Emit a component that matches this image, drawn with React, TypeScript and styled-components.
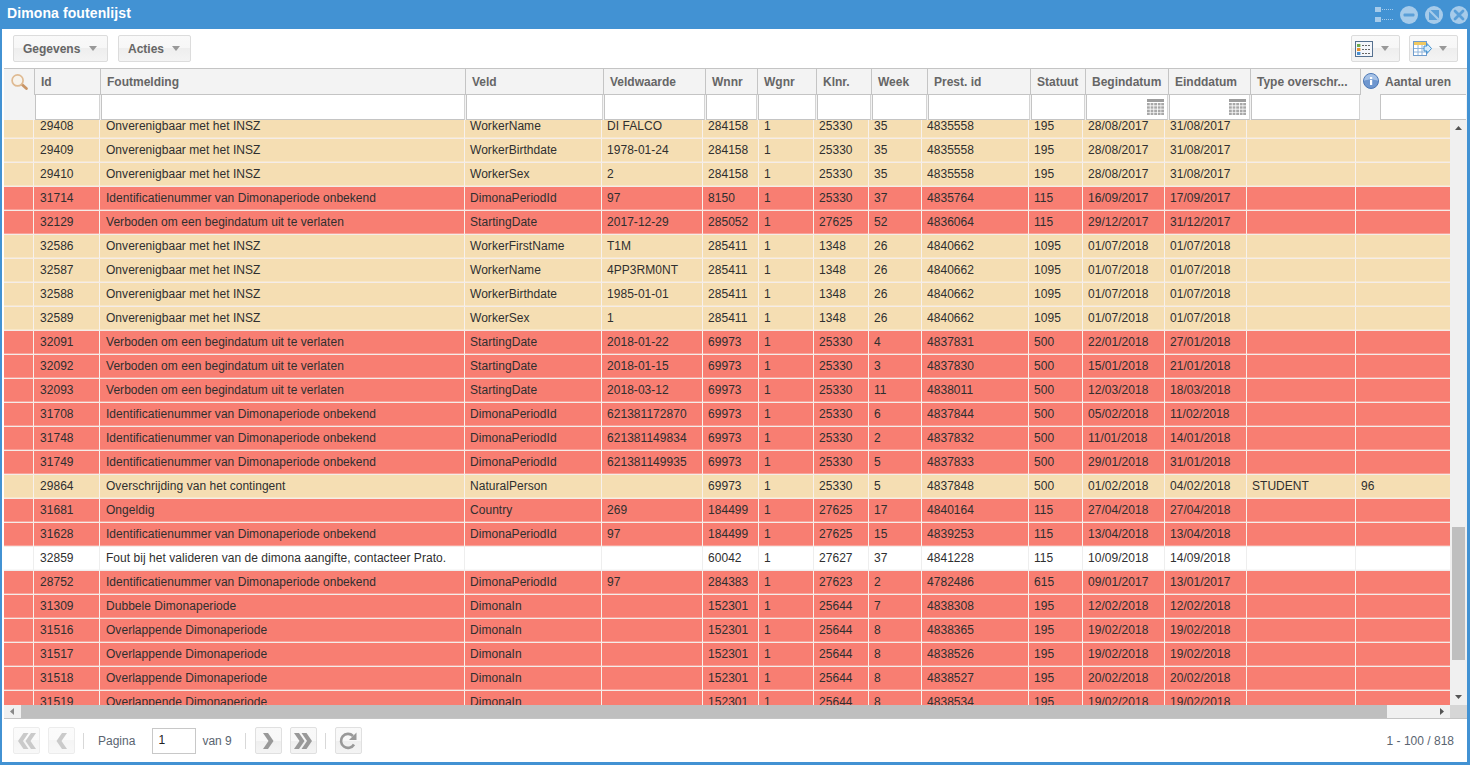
import React from "react";
import styled, { createGlobalStyle } from "styled-components";

const Global = createGlobalStyle`
  html, body { margin: 0; padding: 0; height: 100%; overflow: hidden; }
  #root { height: 100%; }
  * { box-sizing: border-box; }
`;

const headTemplate = "30px 66px 365px 138px 102px 52px 59px 55px 56px 103px 55px 83px 82px 110px 106px";
const bodyTemplate = "29px 66px 365px 137px 101px 56px 55px 55px 53px 107px 54px 82px 82px 109px 95px";

const Window = styled.div`
  height: 765px; width: 1470px; display: flex; flex-direction: column;
  background: #4292d3; padding: 0 3px 3px 2px;
  font-family: "Liberation Sans", Arial, sans-serif;
`;
const TitleBar = styled.div`
  height: 29px; flex: none; display: flex; align-items: center; justify-content: space-between;
  margin-right: -1px; padding-left: 5px; color: #fff; font-size: 14px; font-weight: bold;
`;
const TitleText = styled.span`letter-spacing: .1px; margin-top: -3px;`;
const TitleTools = styled.div`display: flex; align-items: center; gap: 7px;`;
const TreeSlot = styled.span`display: block; line-height: 0; margin-right: -1px;`;
const Panel = styled.div`
  flex: 1; min-height: 0; background: #fff; display: flex; flex-direction: column; padding-left: 2px;
`;
const Toolbar = styled.div`
  height: 39px; flex: none; display: flex; align-items: center; justify-content: space-between;
  padding: 0 9px 0 9px;
`;
const ToolGroup = styled.div<{ $gap: number }>`display: flex; gap: ${p => p.$gap}px;`;
const ToolButton = styled.div<{ $w: number; $icon?: boolean }>`
  width: ${p => p.$w}px; height: 27px; display: flex; align-items: center; justify-content: space-between;
  padding: 0 10px 0 ${p => (p.$icon ? 3 : 9)}px; border: 1px solid #dcdcdc; border-radius: 2px;
  background: linear-gradient(#f9f9f9 0, #f7f7f7 50%, #eeeeee 50%, #f4f4f4 100%);
  color: #666; font-size: 12px; font-weight: bold;
`;
const Caret = styled.span`
  width: 0; height: 0; border: 4.5px solid transparent; border-top: 5px solid #999; border-bottom: 0; display: block;
`;
const Header = styled.div`
  flex: none; height: 52px; display: grid; grid-template-columns: ${headTemplate}; grid-template-rows: 26px 25px;
  border-top: 1px solid #c4c4c4; background: #f3f3f3;
`;
const HeadCell = styled.div`
  display: flex; align-items: center; gap: 7px; padding-left: 6px; font-size: 12px; font-weight: bold; color: #666;
  border-left: 1px solid #c4c4c4; border-bottom: 1px solid #c4c4c4; white-space: nowrap; overflow: hidden;
`;
const SearchCell = styled.div`
  grid-row: 1 / span 2; padding: 5px 0 0 7px; line-height: 0;
`;
const InfoCell = styled(HeadCell)`padding-left: 2px; gap: 6px; border-bottom: 0;`;
const FilterCell = styled.div`
  position: relative; background: #fff; margin-left: 1px;
  border-left: 1px solid #c4c4c4; border-bottom: 1px solid #c4c4c4; border-right: 1px solid #d4d4d4;
`;
const LastFilter = styled.div`
  background: #fff; margin-left: 20px;
  border-left: 1px solid #c4c4c4; border-top: 1px solid #c4c4c4; border-bottom: 1px solid #c4c4c4; margin-top: -1px;
`;
const CalendarSlot = styled.span`position: absolute; right: 3px; top: 4px; display: block; line-height: 0;`;
const BodyArea = styled.div`flex: 1; min-height: 0; display: flex; flex-direction: column;`;
const BodyMain = styled.div`flex: 1; min-height: 0; display: flex;`;
const RowsClip = styled.div`flex: 1; min-width: 0; overflow: hidden;`;
const Rows = styled.div`margin-top: -5px;`;
const Row = styled.div<{ $k: string }>`
  height: 24px; display: grid; grid-template-columns: ${bodyTemplate};
  background: ${p => (p.$k === "o" ? "#f5deb3" : p.$k === "r" ? "#f87e72" : "#fff")};
  border-bottom: 1px solid ${p => (p.$k === "w" ? "#eeeeee" : "#f4ece8")};
  box-shadow: inset 0 -1px 0 ${p => (p.$k === "w" ? "#f8f8f8" : "rgba(255,255,255,.28)")};
`;
const Cell = styled.div<{ $k: string; $pad: number }>`
  border-left: 1px solid ${p => (p.$k === "w" ? "#eeeeee" : "#f7f1ec")};
  padding: 0 0 0 ${p => p.$pad}px; font-size: 12px; line-height: 22px; letter-spacing: .04px; color: #2f2f2f;
  white-space: nowrap; overflow: hidden;
`;
const LeadCell = styled.div``;
const VScroll = styled.div`
  width: 17px; flex: none; background: #f0f0f0; display: flex; flex-direction: column; align-items: center;
`;
const ArrowSlot = styled.div<{ $w?: number; $h: number }>`
  height: ${p => p.$h}px; width: ${p => (p.$w ? `${p.$w}px` : "auto")}; flex: none;
  display: flex; align-items: center; justify-content: center; line-height: 0;
`;
const VThumb = styled.div`width: 13px; height: 133px; flex: none; margin-top: 390px; background: #bfbfbf;`;
const Spacer = styled.div`flex: 1;`;
const HScrollRow = styled.div`height: 13px; flex: none; display: flex; background: #f0f0f0;`;
const HThumb = styled.div`width: 1366px; background: #bfbfbf;`;
const Corner = styled.div`width: 17px; background: #d6d6d6;`;
const Footer = styled.div`
  height: 44px; flex: none; border-top: 1px solid #c4c4c4; display: flex; align-items: center;
  padding: 0 13px 0 9px; font-size: 12px; color: #5a6470;
`;
const PageButton = styled.div<{ $off?: boolean; $m?: number }>`
  width: 27px; height: 27px; flex: none; display: flex; align-items: center; justify-content: center;
  margin-left: ${p => p.$m ?? 0}px; border: 1px solid #e0e0e0; border-radius: 2px;
  background: linear-gradient(#f9f9f9 0, #f8f8f8 50%, #efefef 50%, #f4f4f4 100%);
  opacity: ${p => (p.$off ? 0.6 : 1)};
`;
const Sep = styled.div<{ $m: number }>`width: 1px; height: 16px; background: #d8d8d8; margin-left: ${p => p.$m}px; flex: none;`;
const PageLabel = styled.span<{ $m: number }>`margin-left: ${p => p.$m}px; white-space: nowrap;`;
const PageInput = styled.div`
  width: 44px; height: 26px; flex: none; margin-left: 17px; border: 1px solid #c8c8c8; padding-left: 5px;
  font-size: 12px; line-height: 23px; color: #222;
`;
const Total = styled.div`margin-left: auto;`;

const WinIcon = ({ children }: { children: React.ReactNode }) => (
  <svg width="18" height="18" viewBox="0 0 18 18" fill="none">
    <circle cx="9" cy="9" r="9" fill="#a6cbea" />
    {children}
  </svg>
);
const TreeIcon = () => (
  <svg width="19" height="16" viewBox="0 0 19 16">
    <rect x="0" y="0" width="6" height="5" fill="#a6cbea" />
    <rect x="0" y="10" width="6" height="5" fill="#a6cbea" />
    <path d="M7 2.5h12M7 12.5h12" stroke="#a6cbea" strokeDasharray="1 1" fill="none" />
  </svg>
);
const Magnifier = () => (
  <svg width="17" height="16" viewBox="0 0 17 16" fill="none">
    <path d="M11 10.5l4.400 4" stroke="#c99566" strokeWidth="2.8" strokeLinecap="round" />
    <circle cx="6.600" cy="6.400" r="5.500" fill="#f7f3ec" stroke="#dfba92" strokeWidth="1.700" />
  </svg>
);
const InfoIcon = () => (
  <svg width="16" height="16" viewBox="0 0 16 16" style={{ marginTop: -2 }}>
    <circle cx="8" cy="8" r="7.500" fill="#6f97cf" stroke="#4d78b4" strokeWidth="1" />
    <path d="M1 8a7 7 0 0 1 14 0c-3-2-11-2-14 0z" fill="#a5c1e6" />
    <rect x="7" y="7" width="2.200" height="5" fill="#fff" />
    <rect x="7" y="4" width="2.200" height="2" fill="#fff" />
  </svg>
);
const Calendar = () => (
  <svg width="17" height="16" viewBox="0 0 17 16">
    <rect x="0" y="0" width="17" height="3" fill="#9d9d9d" />
    {[4, 7.3, 10.6, 13.6].map(y =>
      [0, 3.6, 7.2, 10.8, 14.2].map(x => <rect key={`${x}-${y}`} x={x} y={y} width="2.800" height="2.400" fill="#a8a8a8" />)
    )}
  </svg>
);
const ListIcon = () => (
  <svg width="18" height="16" viewBox="0 0 18 16">
    <rect x=".5" y=".5" width="17" height="15" fill="#f4f6fa" stroke="#55708f" />
    <rect x="2" y="3" width="3.400" height="3" fill="#6cab4c" />
    <rect x="2" y="7" width="3.400" height="3" fill="#e8902e" />
    <rect x="2" y="11" width="3.400" height="3" fill="#4a8fd0" />
    <path d="M7 4.500h8M7 8.500h8M7 12.500h8" stroke="#666" strokeDasharray="2 1" />
  </svg>
);
const ExportIcon = () => (
  <svg width="19" height="15" viewBox="0 0 19 15">
    <rect x=".5" y=".5" width="13" height="14" fill="#fff" stroke="#6f9ccc" />
    <rect x="1" y="1" width="12" height="3" fill="#f0c860" />
    <path d="M1 7.500h12M1 11h12M5 4v10M9 4v10" stroke="#8fb4da" />
    <path d="M11 5h3V2.500l4.500 5-4.500 5V10h-3z" fill="#d8ecfa" stroke="#3f8fcf" />
  </svg>
);
const Chevron = ({ double, left, color }: { double?: boolean; left?: boolean; color: string }) => (
  <svg width="20" height="18" viewBox="0 0 20 18" style={{ transform: left ? "scaleX(-1)" : undefined }}>
    {double ? (
      <>
        <path d="M1 1h5l5.500 8L6 17H1l5.500-8z" fill={color} />
        <path d="M8.500 1h5L19 9l-5.500 8h-5L14 9z" fill={color} />
      </>
    ) : (
      <path d="M5 1h5l5.500 8L10 17H5l5.500-8z" fill={color} />
    )}
  </svg>
);
const Refresh = () => (
  <svg width="20" height="20" viewBox="0 0 20 20" fill="none">
    <path d="M16 13.500A7 7 0 1 1 15 5" stroke="#999" strokeWidth="2.600" />
    <path d="M18.500 1.500v7.500h-7.500z" fill="#999" />
  </svg>
);
const Tri = ({ d }: { d: "u" | "d" | "l" | "r" }) => {
  const p = { u: "M1 6h7L4.500 2z", d: "M1 3h7L4.500 7z", l: "M6 1v7L2 4.500z", r: "M3 1v7l4-3.500z" }[d];
  return <svg width="9" height="9" viewBox="0 0 9 9"><path d={p} fill={d === "l" ? "#888" : "#555"} /></svg>;
};

const heads = ["Id", "Foutmelding", "Veld", "Veldwaarde", "Wnnr", "Wgnr", "Klnr.", "Week", "Prest. id", "Statuut", "Begindatum", "Einddatum", "Type overschr..."];

const O = "Onverenigbaar met het INSZ";
const I = "Identificatienummer van Dimonaperiode onbekend";
const V = "Verboden om een begindatum uit te verlaten";
const D = "Overlappende Dimonaperiode";
const DP = "DimonaPeriodId";
const SD = "StartingDate";

const data: [string, ...string[]][] = [
  ["o", "29408", O, "WorkerName", "DI FALCO", "284158", "1", "25330", "35", "4835558", "195", "28/08/2017", "31/08/2017", "", ""],
  ["o", "29409", O, "WorkerBirthdate", "1978-01-24", "284158", "1", "25330", "35", "4835558", "195", "28/08/2017", "31/08/2017", "", ""],
  ["o", "29410", O, "WorkerSex", "2", "284158", "1", "25330", "35", "4835558", "195", "28/08/2017", "31/08/2017", "", ""],
  ["r", "31714", I, DP, "97", "8150", "1", "25330", "37", "4835764", "115", "16/09/2017", "17/09/2017", "", ""],
  ["r", "32129", V, SD, "2017-12-29", "285052", "1", "27625", "52", "4836064", "115", "29/12/2017", "31/12/2017", "", ""],
  ["o", "32586", O, "WorkerFirstName", "T1M", "285411", "1", "1348", "26", "4840662", "1095", "01/07/2018", "01/07/2018", "", ""],
  ["o", "32587", O, "WorkerName", "4PP3RM0NT", "285411", "1", "1348", "26", "4840662", "1095", "01/07/2018", "01/07/2018", "", ""],
  ["o", "32588", O, "WorkerBirthdate", "1985-01-01", "285411", "1", "1348", "26", "4840662", "1095", "01/07/2018", "01/07/2018", "", ""],
  ["o", "32589", O, "WorkerSex", "1", "285411", "1", "1348", "26", "4840662", "1095", "01/07/2018", "01/07/2018", "", ""],
  ["r", "32091", V, SD, "2018-01-22", "69973", "1", "25330", "4", "4837831", "500", "22/01/2018", "27/01/2018", "", ""],
  ["r", "32092", V, SD, "2018-01-15", "69973", "1", "25330", "3", "4837830", "500", "15/01/2018", "21/01/2018", "", ""],
  ["r", "32093", V, SD, "2018-03-12", "69973", "1", "25330", "11", "4838011", "500", "12/03/2018", "18/03/2018", "", ""],
  ["r", "31708", I, DP, "621381172870", "69973", "1", "25330", "6", "4837844", "500", "05/02/2018", "11/02/2018", "", ""],
  ["r", "31748", I, DP, "621381149834", "69973", "1", "25330", "2", "4837832", "500", "11/01/2018", "14/01/2018", "", ""],
  ["r", "31749", I, DP, "621381149935", "69973", "1", "25330", "5", "4837833", "500", "29/01/2018", "31/01/2018", "", ""],
  ["o", "29864", "Overschrijding van het contingent", "NaturalPerson", "", "69973", "1", "25330", "5", "4837848", "500", "01/02/2018", "04/02/2018", "STUDENT", "96"],
  ["r", "31681", "Ongeldig", "Country", "269", "184499", "1", "27625", "17", "4840164", "115", "27/04/2018", "27/04/2018", "", ""],
  ["r", "31628", I, DP, "97", "184499", "1", "27625", "15", "4839253", "115", "13/04/2018", "13/04/2018", "", ""],
  ["w", "32859", "Fout bij het valideren van de dimona aangifte, contacteer Prato.", "", "", "60042", "1", "27627", "37", "4841228", "115", "10/09/2018", "14/09/2018", "", ""],
  ["r", "28752", I, DP, "97", "284383", "1", "27623", "2", "4782486", "615", "09/01/2017", "13/01/2017", "", ""],
  ["r", "31309", "Dubbele Dimonaperiode", "DimonaIn", "", "152301", "1", "25644", "7", "4838308", "195", "12/02/2018", "12/02/2018", "", ""],
  ["r", "31516", D, "DimonaIn", "", "152301", "1", "25644", "8", "4838365", "195", "19/02/2018", "19/02/2018", "", ""],
  ["r", "31517", D, "DimonaIn", "", "152301", "1", "25644", "8", "4838526", "195", "19/02/2018", "19/02/2018", "", ""],
  ["r", "31518", D, "DimonaIn", "", "152301", "1", "25644", "8", "4838527", "195", "20/02/2018", "20/02/2018", "", ""],
  ["r", "31519", D, "DimonaIn", "", "152301", "1", "25644", "8", "4838534", "195", "19/02/2018", "19/02/2018", "", ""],
];

export default function App() {
  return (
    <Window>
      <Global />
      <TitleBar>
        <TitleText>Dimona foutenlijst</TitleText>
        <TitleTools>
          <TreeSlot><TreeIcon /></TreeSlot>
          <WinIcon><rect x="3.500" y="7.500" width="11" height="3" rx="1" fill="#5a9fd8" /></WinIcon>
          <WinIcon>
            <rect x="4" y="4" width="10" height="10" fill="#5a9fd8" />
            <path d="M3.500 5l1.500-1.500 9.500 9.500-1.500 1.500z" fill="#a6cbea" />
          </WinIcon>
          <WinIcon><path d="M5 5l8 8M13 5l-8 8" stroke="#5a9fd8" strokeWidth="2.800" strokeLinecap="round" /></WinIcon>
        </TitleTools>
      </TitleBar>
      <Panel>
        <Toolbar>
          <ToolGroup $gap={10}>
            <ToolButton $w={95}>Gegevens <Caret /></ToolButton>
            <ToolButton $w={73}>Acties <Caret /></ToolButton>
          </ToolGroup>
          <ToolGroup $gap={9}>
            <ToolButton $w={49} $icon><ListIcon /><Caret /></ToolButton>
            <ToolButton $w={49} $icon><ExportIcon /><Caret /></ToolButton>
          </ToolGroup>
        </Toolbar>
        <Header>
          <SearchCell><Magnifier /></SearchCell>
          {heads.map(h => <HeadCell key={h}>{h}</HeadCell>)}
          <InfoCell><InfoIcon />Aantal uren</InfoCell>
          {heads.map(h => (
            <FilterCell key={h}>
              {(h === "Begindatum" || h === "Einddatum") && <CalendarSlot><Calendar /></CalendarSlot>}
            </FilterCell>
          ))}
          <LastFilter />
        </Header>
        <BodyArea>
          <BodyMain>
            <RowsClip>
              <Rows>
                {data.map(([k, ...cells]) => (
                  <Row key={cells[0]} $k={k}>
                    <LeadCell />
                    {cells.map((c, i) => <Cell key={i} $k={k} $pad={i < 2 ? 6 : 5}>{c}</Cell>)}
                  </Row>
                ))}
              </Rows>
            </RowsClip>
            <VScroll>
              <ArrowSlot $h={17}><Tri d="u" /></ArrowSlot>
              <VThumb />
              <Spacer />
              <ArrowSlot $h={17}><Tri d="d" /></ArrowSlot>
            </VScroll>
          </BodyMain>
          <HScrollRow>
            <ArrowSlot $w={17} $h={13}><Tri d="l" /></ArrowSlot>
            <HThumb />
            <Spacer />
            <ArrowSlot $w={17} $h={13}><Tri d="r" /></ArrowSlot>
            <Corner />
          </HScrollRow>
        </BodyArea>
        <Footer>
          <PageButton $off><Chevron double left color="#a8a8a8" /></PageButton>
          <PageButton $off $m={8}><Chevron left color="#a8a8a8" /></PageButton>
          <Sep $m={8} />
          <PageLabel $m={14}>Pagina</PageLabel>
          <PageInput>1</PageInput>
          <PageLabel $m={6}>van 9</PageLabel>
          <Sep $m={13} />
          <PageButton $m={9}><Chevron color="#999" /></PageButton>
          <PageButton $m={8}><Chevron double color="#999" /></PageButton>
          <Sep $m={8} />
          <PageButton $m={9}><Refresh /></PageButton>
          <Total>1 - 100 / 818</Total>
        </Footer>
      </Panel>
    </Window>
  );
}
